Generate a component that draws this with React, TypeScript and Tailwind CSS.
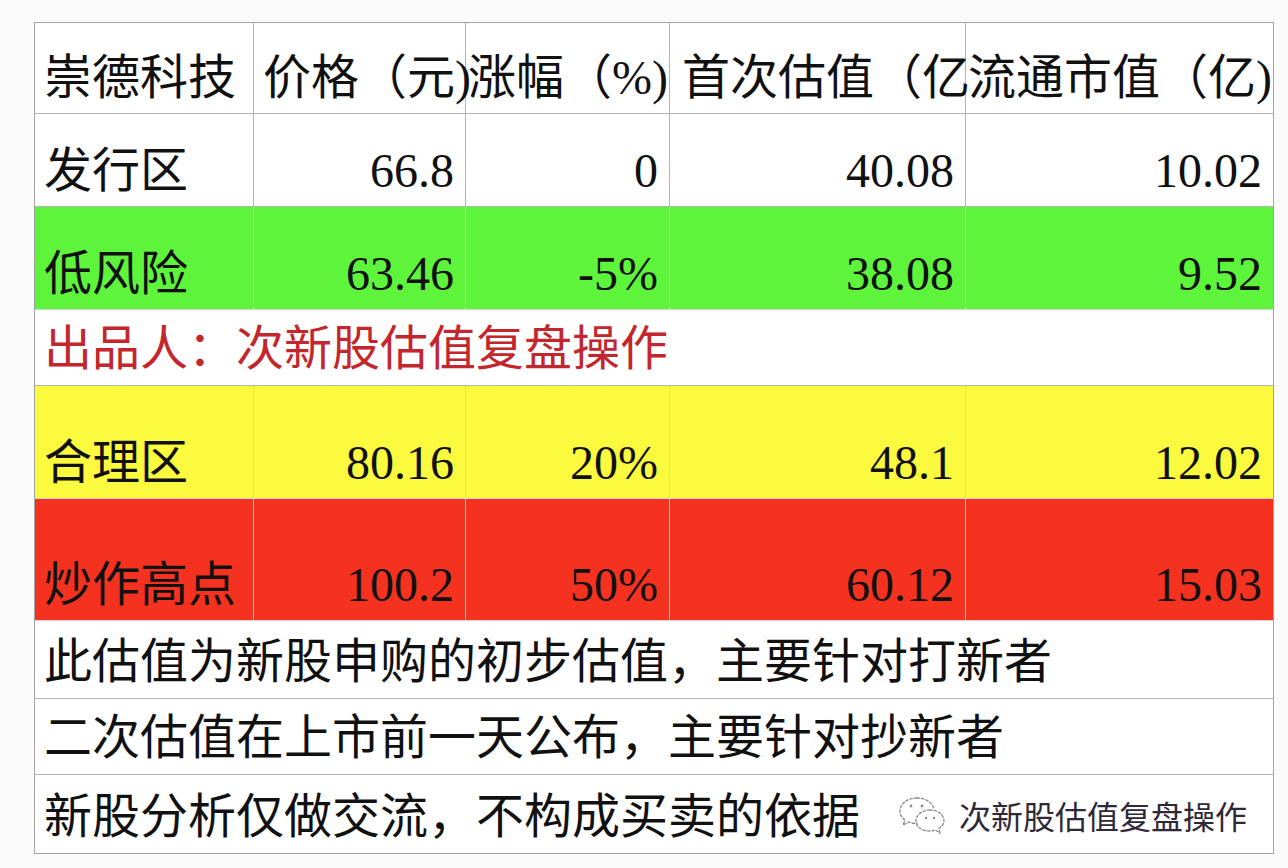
import React from "react";

const FONT = { fontFamily: '"Liberation Serif", "Noto Sans CJK SC", "Noto Sans", serif' };

type Cell = { text: string; align?: "left" | "right"; pl?: string };

function Row({
  h,
  bg,
  sep,
  cells,
  last,
}: {
  h: string;
  bg: string;
  sep: string;
  cells: Cell[];
  last?: boolean;
}) {
  return (
    <div className={`grid grid-cols-[219px_212px_204px_296px_1fr] ${h} ${last ? "" : "border-b " + sep}`}>
      {cells.map((c, i) => (
        <div
          key={i}
          className={`relative flex items-end pb-[11px] ${bg} ${i < 4 ? "border-r " + sep : ""} ${
            c.align === "right" ? "justify-end pr-[11px]" : c.pl ?? "pl-[9px]"
          }`}
        >
          <span className="relative z-10 whitespace-nowrap text-[48px] leading-[48px] text-[#111]">{c.text}</span>
        </div>
      ))}
    </div>
  );
}

function WideRow({
  h,
  text,
  color,
  last,
  children,
}: {
  h: string;
  text: string;
  color: string;
  last?: boolean;
  children?: React.ReactNode;
}) {
  return (
    <div className={`relative flex items-end pb-[12px] pl-[9px] bg-white ${h} ${last ? "" : "border-b border-[#b3b3b3]"}`}>
      <span className={`whitespace-nowrap text-[48px] leading-[48px] ${color}`}>{text}</span>
      {children}
    </div>
  );
}

function WeChatIcon() {
  return (
    <svg width="52" height="42" viewBox="0 0 52 42" fill="none">
      <g stroke="#8a8a8a" strokeWidth="1.3" strokeDasharray="2.5 2" strokeLinecap="round">
        <path d="M20 4 C10 4 3 10 3 17 C3 21 5 24 8 26 L6 31 L12 28 C14 29 17 29.5 20 29.5" />
        <path d="M20 4 C29 4 36 9 37 15" />
        <path d="M33 16 C25 16 19 21 19 27 C19 33 25 37 33 37 C35 37 37 36.6 38.5 36 L43 39 L42 34.5 C45 32.5 47 30 47 27 C47 21 41 16 33 16 Z" />
      </g>
      <circle cx="14" cy="12" r="1.4" fill="#8a8a8a" />
      <circle cx="25" cy="12" r="1.4" fill="#8a8a8a" />
      <circle cx="29" cy="24" r="1.2" fill="#8a8a8a" />
      <circle cx="37" cy="24" r="1.2" fill="#8a8a8a" />
    </svg>
  );
}

export default function App() {
  const white = "bg-white";
  const gsep = "border-[#b3b3b3]";
  const csep = "border-[#d4d4d4]";
  return (
    <div className="w-[1288px] h-[868px] bg-[#fbfbfb] pt-[22px] pl-[34px] overflow-hidden" style={FONT}>
      <div className="w-[1240px] border border-[#a3a3a3] bg-white">
        <Row
          h="h-[91px]"
          bg={white}
          sep={gsep}
          cells={[
            { text: "崇德科技", pl: "pl-[9px]" },
            { text: "价格（元)", pl: "pl-[9px]" },
            { text: "涨幅（%)", pl: "pl-[2px]" },
            { text: "首次估值（亿", pl: "pl-[12px]" },
            { text: "流通市值（亿)", pl: "pl-[2px]" },
          ]}
        />
        <Row
          h="h-[93px]"
          bg={white}
          sep={gsep}
          cells={[
            { text: "发行区" },
            { text: "66.8", align: "right" },
            { text: "0", align: "right" },
            { text: "40.08", align: "right" },
            { text: "10.02", align: "right" },
          ]}
        />
        <Row
          h="h-[103px]"
          bg="bg-[#5ef43c]"
          sep={csep}
          cells={[
            { text: "低风险" },
            { text: "63.46", align: "right" },
            { text: "-5%", align: "right" },
            { text: "38.08", align: "right" },
            { text: "9.52", align: "right" },
          ]}
        />
        <WideRow h="h-[76px]" text="出品人：次新股估值复盘操作" color="text-[#c4262d]" />
        <Row
          h="h-[113px]"
          bg="bg-[#fcfa3e]"
          sep={csep}
          cells={[
            { text: "合理区" },
            { text: "80.16", align: "right" },
            { text: "20%", align: "right" },
            { text: "48.1", align: "right" },
            { text: "12.02", align: "right" },
          ]}
        />
        <Row
          h="h-[122px]"
          bg="bg-[#f5321f]"
          sep={csep}
          cells={[
            { text: "炒作高点" },
            { text: "100.2", align: "right" },
            { text: "50%", align: "right" },
            { text: "60.12", align: "right" },
            { text: "15.03", align: "right" },
          ]}
        />
        <WideRow h="h-[78px]" text="此估值为新股申购的初步估值，主要针对打新者" color="text-[#111]" />
        <WideRow h="h-[76px]" text="二次估值在上市前一天公布，主要针对抄新者" color="text-[#111]" />
        <WideRow h="h-[78px]" text="新股分析仅做交流，不构成买卖的依据" color="text-[#111]" last>
          <div className="absolute left-[862px] top-[19px] flex items-center gap-[10px]">
            <WeChatIcon />
            <span
              className="whitespace-nowrap text-[32px] leading-[40px] text-[#2f2838]"
              style={{ fontFamily: '"Noto Sans CJK SC", sans-serif' }}
            >
              次新股估值复盘操作
            </span>
          </div>
        </WideRow>
      </div>
    </div>
  );
}
